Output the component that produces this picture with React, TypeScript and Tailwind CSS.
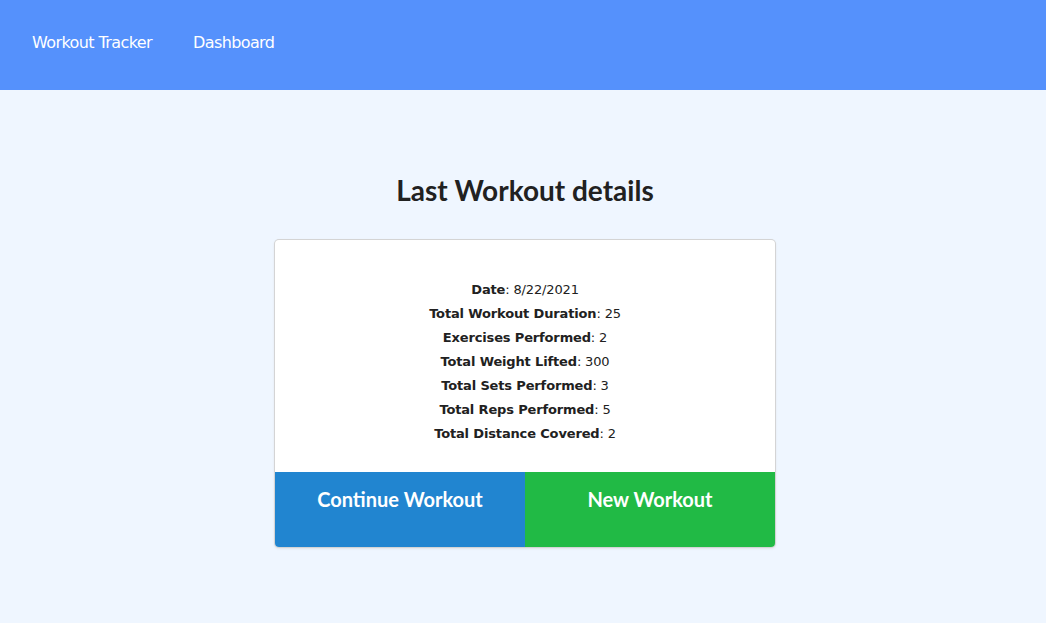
import React from "react";

const stats: [string, string][] = [
  ["Date", "8/22/2021"],
  ["Total Workout Duration", "25"],
  ["Exercises Performed", "2"],
  ["Total Weight Lifted", "300"],
  ["Total Sets Performed", "3"],
  ["Total Reps Performed", "5"],
  ["Total Distance Covered", "2"],
];

function App() {
  return (
    <div className="min-h-[623px] bg-[#eff6ff] font-['DejaVu_Sans',sans-serif]">
      <nav className="h-[90px] bg-[#5591fc] flex items-center px-8 gap-[41px] text-white text-[16px] pb-[4px]">
        <a className="tracking-[-0.6px]">Workout Tracker</a>
        <a className="tracking-[-0.6px]">Dashboard</a>
      </nav>
      <div className="flex flex-col items-center pl-[4px]">
        <h1 className="mt-[83px] text-[28px] leading-[34px] font-bold text-[#212121] font-['Lato',sans-serif]">
          Last Workout details
        </h1>
        <div className="mt-[33px] w-[500px] bg-white rounded-[4px] shadow-[0_1px_3px_0_#d4d4d5,0_0_0_1px_#d4d4d5] overflow-hidden">
          <div className="pt-[38px] pb-[26px] flex flex-col items-center text-[13px] leading-[24px] text-[#212121] tracking-[-0.15px]">
            {stats.map(([k, v]) => (
              <div key={k}>
                <span className="font-bold">{k}</span>: {v}
              </div>
            ))}
          </div>
          <div className="flex h-[75px] font-['Lato',sans-serif] text-white text-[20px] font-bold">
            <button className="flex-1 bg-[#2185d0] pt-[12px] flex justify-center">
              Continue Workout
            </button>
            <button className="flex-1 bg-[#21ba45] pt-[12px] flex justify-center">
              New Workout
            </button>
          </div>
        </div>
      </div>
    </div>
  );
}

export default App;
